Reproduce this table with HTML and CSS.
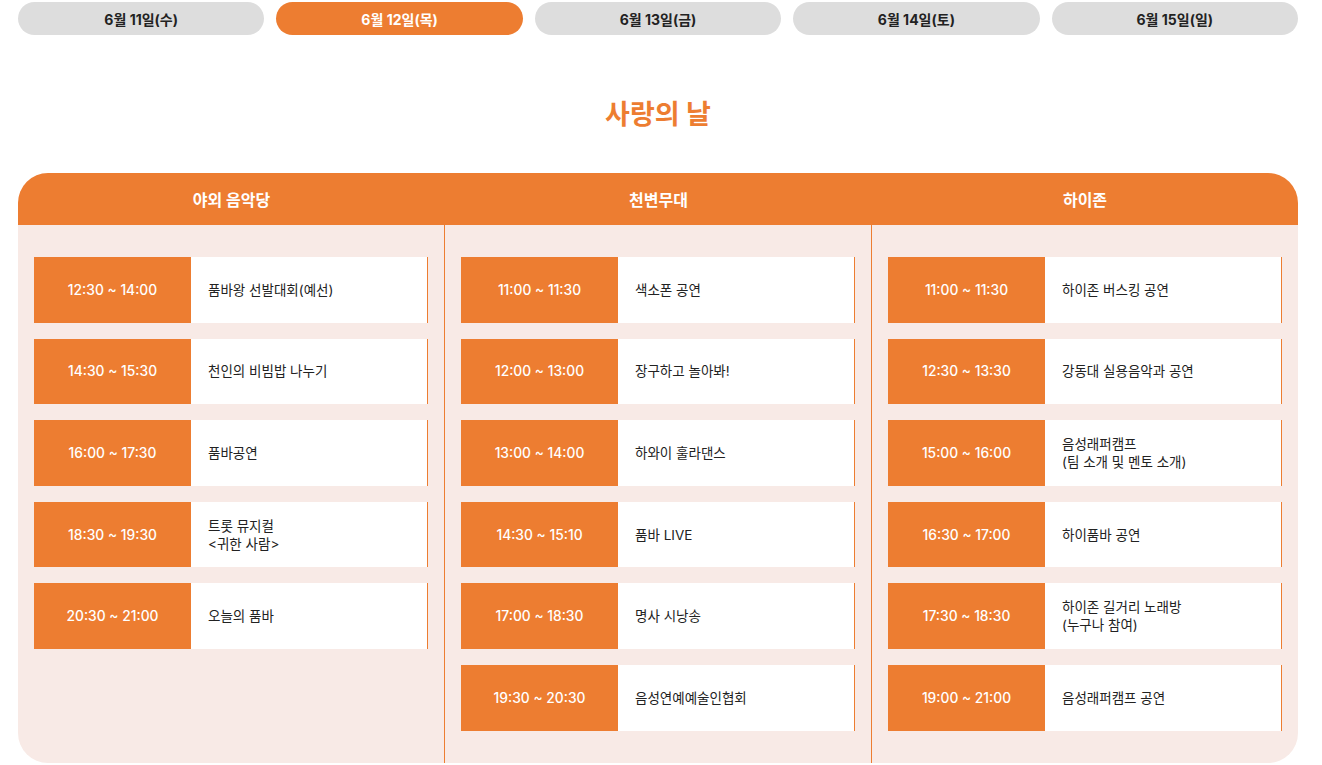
FILE: index.html
```html
<!DOCTYPE html>
<html lang="ko">
<head>
<meta charset="utf-8">
<title>사랑의 날</title>
<link rel="stylesheet" href="styles.css">
</head>
<body>
<div class="page">
  <nav class="tabs">
    <button class="tab">6월 11일(수)</button>
    <button class="tab active">6월 12일(목)</button>
    <button class="tab">6월 13일(금)</button>
    <button class="tab">6월 14일(토)</button>
    <button class="tab">6월 15일(일)</button>
  </nav>
  <h1 class="title">사랑의 날</h1>
  <section class="schedule">
    <div class="head">
      <div class="head-cell">야외 음악당</div>
      <div class="head-cell">천변무대</div>
      <div class="head-cell">하이존</div>
    </div>
    <div class="body">
      <div class="col">
        <div class="item"><div class="time">12:30 ~ 14:00</div><div class="name">품바왕 선발대회(예선)</div></div>
        <div class="item"><div class="time">14:30 ~ 15:30</div><div class="name">천인의 비빔밥 나누기</div></div>
        <div class="item"><div class="time">16:00 ~ 17:30</div><div class="name">품바공연</div></div>
        <div class="item"><div class="time">18:30 ~ 19:30</div><div class="name">트롯 뮤지컬<br>&lt;귀한 사람&gt;</div></div>
        <div class="item"><div class="time">20:30 ~ 21:00</div><div class="name">오늘의 품바</div></div>
      </div>
      <div class="col">
        <div class="item"><div class="time">11:00 ~ 11:30</div><div class="name">색소폰 공연</div></div>
        <div class="item"><div class="time">12:00 ~ 13:00</div><div class="name">장구하고 놀아봐!</div></div>
        <div class="item"><div class="time">13:00 ~ 14:00</div><div class="name">하와이 훌라댄스</div></div>
        <div class="item"><div class="time">14:30 ~ 15:10</div><div class="name">품바 LIVE</div></div>
        <div class="item"><div class="time">17:00 ~ 18:30</div><div class="name">명사 시낭송</div></div>
        <div class="item"><div class="time">19:30 ~ 20:30</div><div class="name">음성연예예술인협회</div></div>
      </div>
      <div class="col">
        <div class="item"><div class="time">11:00 ~ 11:30</div><div class="name">하이존 버스킹 공연</div></div>
        <div class="item"><div class="time">12:30 ~ 13:30</div><div class="name">강동대 실용음악과 공연</div></div>
        <div class="item"><div class="time">15:00 ~ 16:00</div><div class="name">음성래퍼캠프<br>(팀 소개 및 멘토 소개)</div></div>
        <div class="item"><div class="time">16:30 ~ 17:00</div><div class="name">하이품바 공연</div></div>
        <div class="item"><div class="time">17:30 ~ 18:30</div><div class="name">하이존 길거리 노래방<br>(누구나 참여)</div></div>
        <div class="item"><div class="time">19:00 ~ 21:00</div><div class="name">음성래퍼캠프 공연</div></div>
      </div>
    </div>
  </section>
</div>
</body>
</html>
```

FILE: styles.css
```css
* { box-sizing: border-box; }
html, body { margin: 0; padding: 0; background: #fff; }
body {
  font-family: "Inter", "Noto Sans CJK KR", sans-serif;
  color: #222;
}
.page {
  width: 1280px;
  margin-left: 18px;
  padding-top: 2px;
}
.tabs {
  display: grid;
  grid-template-columns: repeat(5, 1fr);
  gap: 12px;
}
.tab {
  height: 33px;
  border: 0;
  border-radius: 17px;
  background: #dddddd;
  color: #222;
  font-family: inherit;
  font-size: 14px;
  font-weight: 700;
  padding: 0;
}
.tab.active {
  background: #ed7d31;
  color: #fff;
}
.title {
  margin: 62px 0 0;
  height: 36px;
  line-height: 36px;
  text-align: center;
  font-size: 27px;
  font-weight: 700;
  color: #ed7d31;
}
.schedule {
  margin-top: 40px;
}
.head {
  display: grid;
  grid-template-columns: 427px 427px 426px;
  height: 52px;
  background: #ed7d31;
  border-radius: 30px 30px 0 0;
}
.head-cell {
  display: flex;
  align-items: center;
  justify-content: center;
  color: #fff;
  font-size: 16px;
  font-weight: 700;
}
.body {
  display: grid;
  grid-template-columns: 427px 427px 426px;
  background: #f8eae6;
  border-radius: 0 0 30px 30px;
}
.col {
  display: flex;
  flex-direction: column;
  gap: 16px;
  padding: 32px 16px 32px;
}
.col:not(:last-child) {
  border-right: 1px solid #ed7d31;
}
.item {
  display: flex;
  height: 65.6px;
  background: #fff;
  border-right: 1px solid #ed7d31;
}
.time {
  flex: 0 0 157px;
  display: flex;
  align-items: center;
  justify-content: center;
  background: #ed7d31;
  color: #fff;
  font-size: 13.8px;
  font-weight: 500;
}
.name {
  flex: 1;
  display: flex;
  flex-direction: column;
  justify-content: center;
  padding-left: 17px;
  font-size: 13.5px;
  line-height: 18px;
  color: #222;
}
```
